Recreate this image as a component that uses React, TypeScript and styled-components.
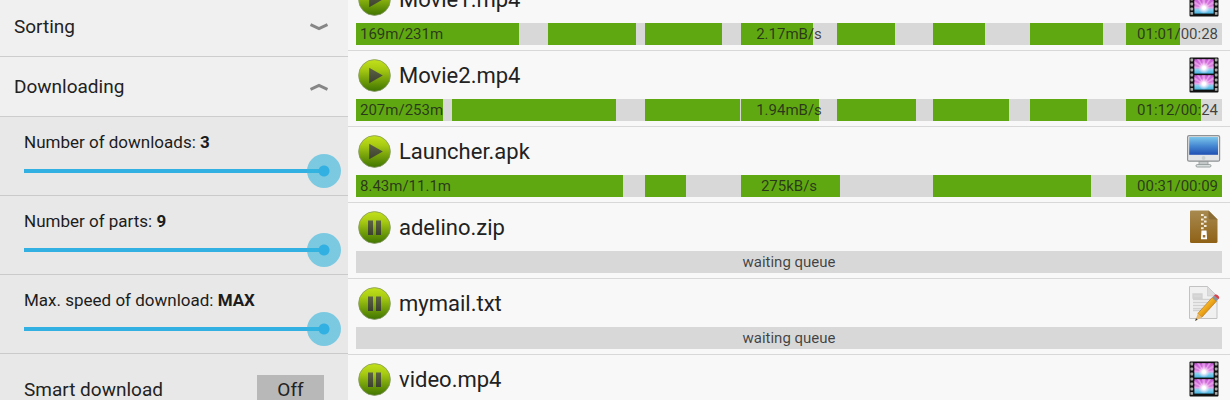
import { useState } from "react";
import styled, { createGlobalStyle } from "styled-components";

const GlobalStyle = createGlobalStyle`
  *, *::before, *::after { box-sizing: border-box; }
  body { margin: 0; font-family: Roboto, "Liberation Sans", sans-serif; color: #222; background: #f8f8f8; }
  button { font: inherit; color: inherit; border: 0; padding: 0; background: none; cursor: pointer; }
`;

const Page = styled.div`
  display: flex;
  height: 100vh;
  overflow: hidden;
`;

const Sidebar = styled.aside`
  flex: none;
  width: 348px;
  background: #e8e8e8;
`;

/* Both panes are shown partly scrolled. */
const Scrolled = styled.div<{ $by: number }>`
  margin-top: ${(p) => -p.$by}px;
`;

const SectionButton = styled.button`
  display: flex;
  align-items: center;
  justify-content: space-between;
  width: 100%;
  height: 60px;
  padding: 0 20px 0 14px;
  background: #f0f0f0;
  border-bottom: 1px solid #cdcdcd;
  font-size: 19px;
  line-height: 24px;
`;

const Setting = styled.div`
  padding: 15px 7px 7px 24px;
  border-bottom: 1px solid #cacaca;
`;

const SettingLabel = styled.label`
  display: block;
  margin-bottom: 2px;
  font-size: 17px;
  line-height: 20px;
  color: #1c1c1c;
`;

const Slider = styled.input<{ $ratio: number }>`
  appearance: none;
  display: block;
  width: 100%;
  height: 34px;
  margin: 0;
  background: linear-gradient(#33b0e2, #33b0e2) no-repeat left center;
  background-size: calc((100% - 34px) * ${(p) => p.$ratio} + 17px) 4px;
  &::-webkit-slider-thumb {
    appearance: none;
    width: 34px;
    height: 34px;
    border-radius: 50%;
    background: radial-gradient(circle, #33b0e2 5px, rgba(51, 181, 221, 0.6) 6px);
  }
`;

const SwitchRow = styled.div`
  display: flex;
  align-items: center;
  justify-content: space-between;
  padding: 21px 24px;
  font-size: 19px;
  line-height: 30px;
`;

const Toggle = styled.button`
  width: 67px;
  height: 30px;
  background: #b8b8b8;
`;

const Main = styled.main`
  flex: 1;
  min-width: 0;
`;

const List = styled.ul`
  margin: 0;
  padding: 0;
  list-style: none;
`;

const Row = styled.li`
  padding: 0 8px 5px;
  border-bottom: 1px solid #d8d8d8;
`;

const RowHead = styled.div`
  display: flex;
  align-items: center;
  height: 48px;
  padding: 0 1px 0 2px;
`;

const StateButton = styled.button`
  width: 33px;
  height: 33px;
  svg { display: block; }
`;

const FileName = styled.span`
  flex: 1;
  margin-left: 8px;
  padding-top: 2px;
  font-size: 22px;
  line-height: 28px;
`;

const Bar = styled.div`
  display: grid;
  height: 22px;
  background: #d8d8d8;
  > * { grid-area: 1 / 1; }
`;

const Parts = styled.div`
  display: grid;
  grid-template-columns: repeat(9, 1fr);
`;

const Part = styled.div`
  background: #60a811;
`;

const Stats = styled.div`
  display: grid;
  grid-template-columns: 1fr auto 1fr;
  padding: 0 4px;
  font-size: 15px;
  line-height: 22px;
  color: rgba(30, 30, 30, 0.82);
  span:last-child { text-align: right; }
`;

function Chevron({ up }: { up?: boolean }) {
  return (
    <svg width="18" height="8" viewBox="0 0 18 8" fill="none" stroke="#868686" strokeWidth="3">
      <path d={up ? "M.5 6.3 9 2.4l8.500 3.900" : "M.5 1.700 9 5.600l8.500-3.900"} />
    </svg>
  );
}

function StateIcon({ playing }: { playing: boolean }) {
  return (
    <svg width="33" height="33" viewBox="0 0 33 33">
      <defs>
        <linearGradient id="lime" x2="0" y2="1">
          <stop offset="0" stopColor="#c3e11b" />
          <stop offset=".3" stopColor="#a9cc12" />
          <stop offset=".65" stopColor="#739f0a" />
          <stop offset="1" stopColor="#3f7400" />
        </linearGradient>
        <linearGradient id="glyph" x2="0" y2="1">
          <stop offset="0" stopColor="#5c6442" />
          <stop offset="1" stopColor="#3c4030" />
        </linearGradient>
      </defs>
      <circle cx="16.5" cy="16.500" r="15.900" fill="url(#lime)" stroke="#87976a" strokeWidth=".8" />
      {playing ? (
        <path d="M11.200 8.800 24.800 16.500 11.200 24.200Z" fill="url(#glyph)" />
      ) : (
        <path d="M10 9.500h5V24h-5zM18 9.500h5V24h-5z" fill="url(#glyph)" />
      )}
    </svg>
  );
}

const FRAMES = [2.2, 18.2];
const HOLES = [1.6, 6.6, 11.6, 16.6, 21.6, 26.600, 31];

function FilmIcon() {
  return (
    <svg width="34" height="36" viewBox="0 0 34 36">
      <defs>
        <linearGradient id="sky" x2="0" y2="1">
          <stop offset="0" stopColor="#c65ad6" />
          <stop offset=".55" stopColor="#dd86e2" />
          <stop offset=".7" stopColor="#8fd3f2" />
          <stop offset="1" stopColor="#45b4e0" />
        </linearGradient>
        <radialGradient id="sun">
          <stop offset=".25" stopColor="#fff" />
          <stop offset="1" stopColor="#fbd8f8" stopOpacity="0" />
        </radialGradient>
      </defs>
      <rect x="2.500" y=".5" width="29" height="35" rx="1" fill="#111" />
      {HOLES.map((y) => (
        <g key={y} fill="#a9a9a9">
          <rect x="3.500" y={y} width="2.600" height="2.800" rx=".6" />
          <rect x="27.900" y={y} width="2.600" height="2.800" rx=".6" />
        </g>
      ))}
      {FRAMES.map((y) => (
        <g key={y} transform={`translate(7.400 ${y})`}>
          <rect width="19.200" height="14.400" fill="url(#sky)" />
          <path
            d="M9.600 9 0 1.500V4.500ZM9.600 9 2.500 0H5ZM9.600 9 7.600 0h3.500ZM9.600 9 14 0h2.600ZM9.600 9l9.600-7.500v3ZM9.600 9 0 7v2.200ZM9.600 9l9.600-2v2.200Z"
            fill="#f3b8f1"
            opacity=".6"
          />
          <circle cx="9.600" cy="8.600" r="6" fill="url(#sun)" />
        </g>
      ))}
    </svg>
  );
}

function MonitorIcon() {
  return (
    <svg width="34" height="36" viewBox="0 0 34 36">
      <defs>
        <linearGradient id="screen" x2="0" y2="1">
          <stop offset="0" stopColor="#7cc6ec" />
          <stop offset=".5" stopColor="#4688d2" />
          <stop offset="1" stopColor="#2150b4" />
        </linearGradient>
      </defs>
      <path d="M12 28h9v4h-9z" fill="#c4c8c8" stroke="#949a9a" strokeWidth=".8" />
      <rect x="9" y="31.600" width="15" height="2.400" rx="1.200" fill="#dfe3e3" stroke="#8f9696" strokeWidth=".9" />
      <rect x=".6" y="2.600" width="32" height="25.600" rx="1.500" fill="#e4e5e6" stroke="#8e9294" strokeWidth="1.200" />
      <rect x="2.200" y="4" width="28.800" height="17.800" fill="url(#screen)" />
      <circle cx="16.600" cy="25" r="1.900" fill="#ced1d2" />
    </svg>
  );
}

function ZipIcon() {
  return (
    <svg width="34" height="36" viewBox="0 0 34 36">
      <defs>
        <linearGradient id="kraft" x2="0" y2="1">
          <stop offset="0" stopColor="#a88a50" />
          <stop offset="1" stopColor="#8f6116" />
        </linearGradient>
      </defs>
      <path d="M4 1.500h17.500L30.500 10.500v22a1.500 1.500 0 0 1-1.500 1.500H4.500A1.500 1.500 0 0 1 3 32.500v-30A1 1 0 0 1 4 1.500Z" fill="url(#kraft)" />
      <path d="M21.500 1.500 30.500 10.500h-7a2 2 0 0 1-2-2Z" fill="#8b6c35" />
      <path
        d="M14 5h2.600v2H14zM17 7.200h2.600v2H17zM14 9.400h2.600v2H14zM17 11.600h2.600v2H17zM14 13.800h2.600v2H14zM17 16h2.600v2H17zM14 18.200h2.600v2H14z"
        fill="#f2ead8"
      />
      <path d="M14.500 21.600h5l.6 8.600h-6.200z" fill="#fff" />
      <path d="M15.800 26h2.500v2.500h-2.500z" fill="#9a7433" />
    </svg>
  );
}

function TextIcon() {
  return (
    <svg width="34" height="36" viewBox="0 0 34 36">
      <defs>
        <linearGradient id="wood" x1="0" y1="0" x2="1" y2="1">
          <stop offset=".3" stopColor="#ffc52e" />
          <stop offset=".7" stopColor="#d98709" />
        </linearGradient>
      </defs>
      <path d="M2.500 1.500h18L30 11v22.500H2.500Z" fill="#f0f0f0" stroke="#c2c2c2" strokeWidth="1" />
      <path d="M20.500 1.500V11H30Z" fill="#dcdcdc" stroke="#c9c9c9" strokeWidth=".6" />
      <path d="M6 9h9v4H6zM6 14.500h19M6 17.500h19M6 20.500h19M6 23.500h17M6 25.500h14" fill="#d7d7d7" stroke="#d1d1d1" strokeWidth="1.300" />
      <path d="m10.800 28.500 14.400-16 4.200 3.800-14.600 16Z" fill="url(#wood)" stroke="#ae6b0d" strokeWidth=".6" />
      <path d="m10.800 28.500 4 3.800-6.600 3.600Z" fill="#e9b868" />
      <path d="m9 33.200 1.600 1.400-2.400 1.300Z" fill="#333" />
      <path d="m25.200 12.500 1.800-2 4.200 3.800-1.800 2Z" fill="#85949e" />
      <path d="m27 10.500.8-.8c1.600-1.200 5.400 1.800 4.200 3.700l-.8.900Z" fill="#d9414b" />
    </svg>
  );
}

const ICONS = { film: FilmIcon, monitor: MonitorIcon, zip: ZipIcon, text: TextIcon };

type Download = {
  name: string;
  icon: keyof typeof ICONS;
  parts?: number[];
  size?: string;
  speed?: string;
  time?: string;
};

const DOWNLOADS: Download[] = [
  { name: "Movie1.mp4", icon: "film", parts: [100, 69, 91, 80, 75, 60, 54, 76, 56], size: "169m/231m", speed: "2.17mB/s", time: "01:01/00:28" },
  { name: "Movie2.mp4", icon: "film", parts: [90, 100, 70, 99, 81, 82, 79, 60, 78], size: "207m/253m", speed: "1.94mB/s", time: "01:12/00:24" },
  { name: "Launcher.apk", icon: "monitor", parts: [100, 100, 77, 43, 100, 3, 100, 64, 100], size: "8.43m/11.1m", speed: "275kB/s", time: "00:31/00:09" },
  { name: "adelino.zip", icon: "zip" },
  { name: "mymail.txt", icon: "text" },
  { name: "video.mp4", icon: "film" },
];

function DownloadRow({ item }: { item: Download }) {
  const Icon = ICONS[item.icon];
  return (
    <Row>
      <RowHead>
        <StateButton aria-label={item.parts ? "Downloading" : "Paused"}>
          <StateIcon playing={!!item.parts} />
        </StateButton>
        <FileName>{item.name}</FileName>
        <Icon />
      </RowHead>
      <Bar>
        <Parts>
          {item.parts?.map((done, i) => (
            <Part key={i} style={{ width: `${done}%` }} />
          ))}
        </Parts>
        <Stats>
          <span>{item.size}</span>
          <span>{item.speed ?? "waiting queue"}</span>
          <span>{item.time}</span>
        </Stats>
      </Bar>
    </Row>
  );
}

type SliderSettingProps = { id: string; label: string; max: number; top?: string };

function SliderSetting({ id, label, max, top }: SliderSettingProps) {
  const [value, setValue] = useState(max);
  return (
    <Setting>
      <SettingLabel htmlFor={id}>
        {label}: <b>{value === max && top ? top : value}</b>
      </SettingLabel>
      <Slider
        id={id}
        type="range"
        min={1}
        max={max}
        value={value}
        $ratio={(value - 1) / (max - 1)}
        onChange={(e) => setValue(Number(e.target.value))}
      />
    </Setting>
  );
}

export default function App() {
  const [smart, setSmart] = useState(false);
  return (
    <Page>
      <GlobalStyle />
      <Sidebar>
        <Scrolled $by={3}>
          <SectionButton aria-expanded={false}>
            Sorting
            <Chevron />
          </SectionButton>
          <SectionButton aria-expanded>
            Downloading
            <Chevron up />
          </SectionButton>
          <SliderSetting id="downloads" label="Number of downloads" max={3} />
          <SliderSetting id="parts" label="Number of parts" max={9} />
          <SliderSetting id="speed" label="Max. speed of download" max={100} top="MAX" />
          <SwitchRow>
            <span id="smart">Smart download</span>
            <Toggle role="switch" aria-checked={smart} aria-labelledby="smart" onClick={() => setSmart(!smart)}>
              {smart ? "On" : "Off"}
            </Toggle>
          </SwitchRow>
        </Scrolled>
      </Sidebar>
      <Main>
        <Scrolled $by={25}>
          <List>
            {DOWNLOADS.map((item) => (
              <DownloadRow key={item.name} item={item} />
            ))}
          </List>
        </Scrolled>
      </Main>
    </Page>
  );
}
